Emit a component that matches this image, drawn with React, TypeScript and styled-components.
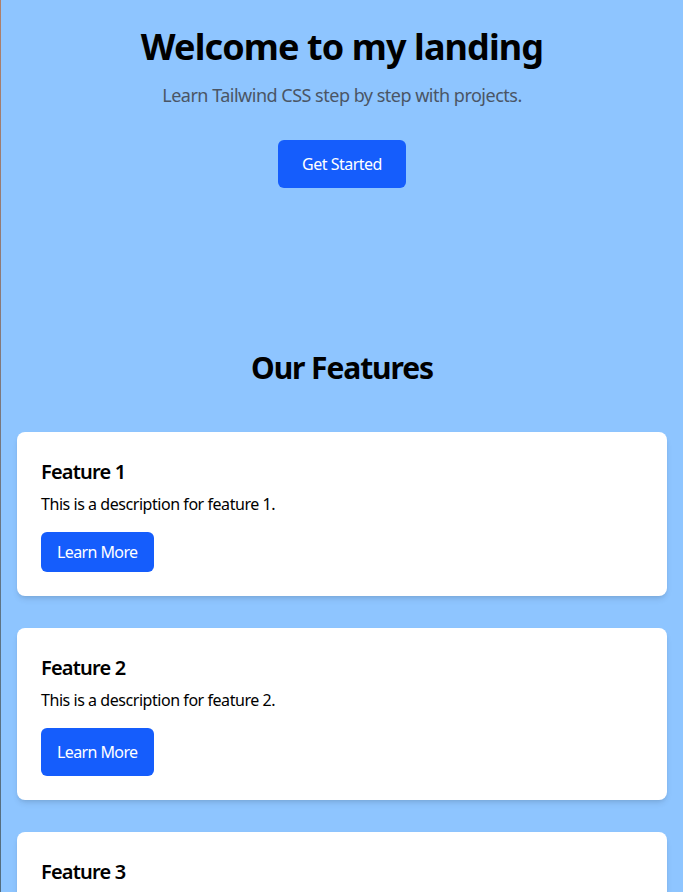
import React from "react";
import styled, { createGlobalStyle } from "styled-components";

const GlobalStyle = createGlobalStyle`
  html, body {
    margin: 0;
    padding: 0;
  }
  body {
    background: #8ec5ff;
    border-left: 1px solid #6b7c88;
    border-image: linear-gradient(to bottom, #b0806a 0%, #8c7a78 30%, #5e7486 60%, #4f6a7c 100%) 1;
    font-family: "Noto Sans", "Open Sans", sans-serif;
    color: #000;
    min-height: 892px;
    box-sizing: border-box;
  }
  * { box-sizing: border-box; }
`;

const Page = styled.div`
  display: flex;
  flex-direction: column;
`;

const Hero = styled.section`
  display: flex;
  flex-direction: column;
  align-items: center;
  text-align: center;
  padding: 27px 16px 80px;
`;

const Title = styled.h1`
  margin: 0;
  font-size: 36px;
  line-height: 40px;
  font-weight: 700;
  letter-spacing: -0.9px;
`;

const Subtitle = styled.p`
  margin: 14px 0 0;
  font-size: 18px;
  line-height: 28px;
  color: #4a5565;
  letter-spacing: -0.5px;
`;

const Button = styled.button<{ $tall?: boolean; $wide?: boolean }>`
  font-family: inherit;
  border: none;
  background: #155dfc;
  color: #fff;
  font-size: 16px;
  line-height: 24px;
  letter-spacing: -0.6px;
  border-radius: 6px;
  padding: ${(p) => (p.$tall ? "12px" : "8px")} ${(p) => (p.$wide ? "24px" : "16px")};
  cursor: pointer;
`;

const HeroButton = styled(Button)`
  margin-top: 31px;
  letter-spacing: -0.5px;
`;

const Features = styled.section`
  display: flex;
  flex-direction: column;
  padding: 82px 16px 0;
`;

const SectionTitle = styled.h2`
  margin: 0 0 46px;
  text-align: center;
  font-size: 30px;
  line-height: 36px;
  font-weight: 700;
  letter-spacing: -1.1px;
`;

const CardList = styled.div`
  display: flex;
  flex-direction: column;
  gap: 32px;
`;

const Card = styled.div`
  background: #fff;
  border-radius: 8px;
  padding: 24px;
  box-shadow: 0 4px 6px -1px rgba(0, 0, 0, 0.1), 0 2px 4px -2px rgba(0, 0, 0, 0.1);
  display: flex;
  flex-direction: column;
  align-items: flex-start;
`;

const CardTitle = styled.h3`
  margin: 0 0 6px;
  padding-top: 2px;
  font-size: 20px;
  line-height: 28px;
  font-weight: 600;
  letter-spacing: -0.8px;
`;

const CardText = styled.p`
  margin: 0 0 16px;
  font-size: 16px;
  line-height: 24px;
  letter-spacing: -0.45px;
`;

const features = [
  { id: 1, tall: false },
  { id: 2, tall: true },
  { id: 3, tall: false },
];

export default function App() {
  return (
    <>
      <GlobalStyle />
      <Page>
        <Hero>
          <Title>Welcome to my landing</Title>
          <Subtitle>Learn Tailwind CSS step by step with projects.</Subtitle>
          <HeroButton $tall $wide>Get Started</HeroButton>
        </Hero>
        <Features>
          <SectionTitle>Our Features</SectionTitle>
          <CardList>
            {features.map((f) => (
              <Card key={f.id}>
                <CardTitle>Feature {f.id}</CardTitle>
                <CardText>This is a description for feature {f.id}.</CardText>
                <Button $tall={f.tall}>Learn More</Button>
              </Card>
            ))}
          </CardList>
        </Features>
      </Page>
    </>
  );
}
